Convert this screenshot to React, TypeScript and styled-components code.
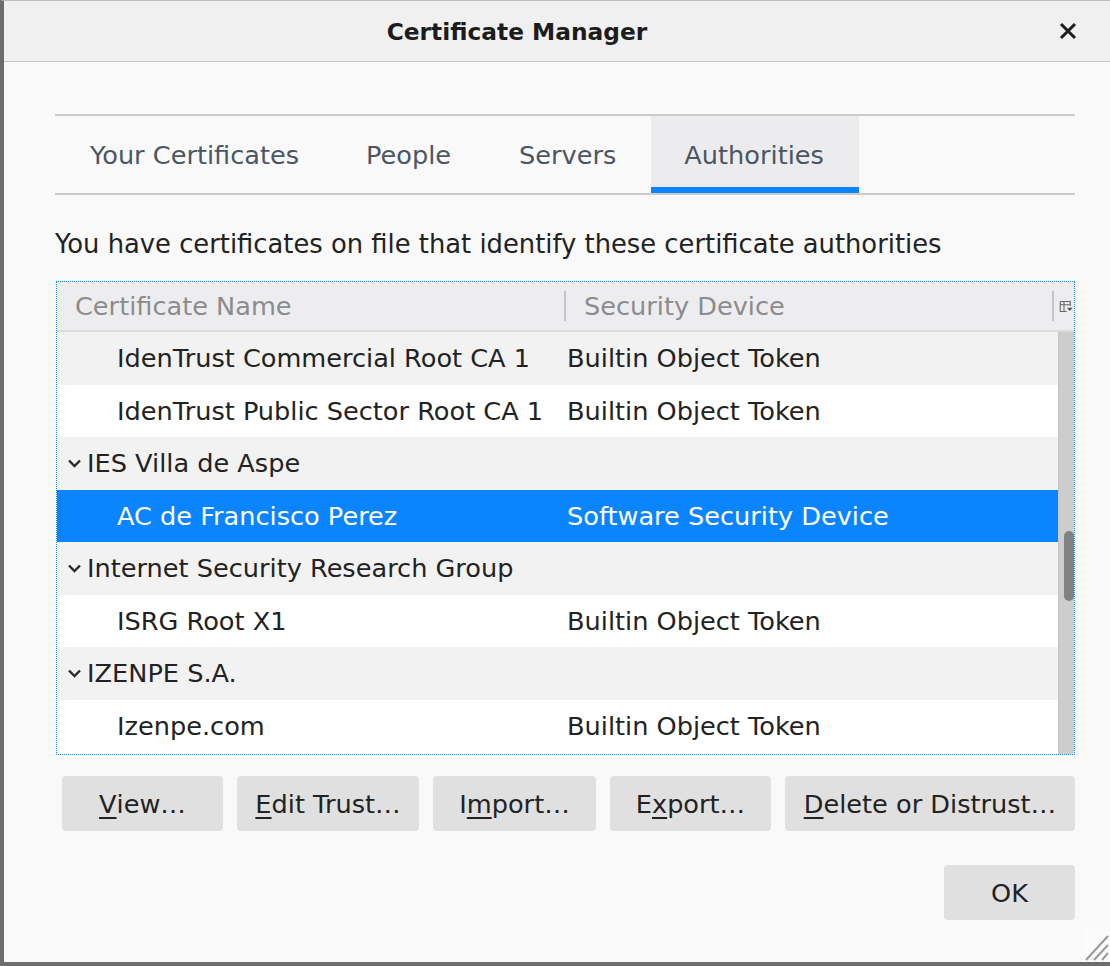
import React from "react";
import styled, { createGlobalStyle } from "styled-components";

const Global = createGlobalStyle`
  html, body { margin: 0; padding: 0; background: #f9f9f9; }
  body { font-family: "DejaVu Sans", "Noto Sans", sans-serif; }
  * { box-sizing: border-box; }
`;

const FS = "25.6px";

const Window = styled.div`
  position: relative;
  width: 1110px;
  height: 966px;
  border-left: 4px solid #6d6d6d;
  border-bottom: 4px solid #6d6d6d;
  border-top: 1px solid #bdbdbd;
  background: #f9f9f9;
  display: flex;
  flex-direction: column;
`;

const TitleBar = styled.div`
  height: 61px;
  flex: none;
  background: #f0f0f0;
  border-bottom: 1px solid #c6c6c6;
  display: flex;
  align-items: center;
`;

const Title = styled.div`
  flex: 1;
  text-align: center;
  font-weight: bold;
  font-size: 23.3px;
  color: #1c1c1c;
`;

const CloseBox = styled.div`
  width: 80px;
  display: flex;
  justify-content: center;
  align-items: center;
  padding-right: 4px;
`;

const Body = styled.div`
  flex: 1;
  padding: 52px 35px 0 51px;
  display: flex;
  flex-direction: column;
`;

const TabList = styled.div`
  display: flex;
  border-top: 2px solid #cbcbcb;
  border-bottom: 2px solid #cbcbcb;
`;

const Tab = styled.div<{ $active?: boolean }>`
  height: 77px;
  padding: 0 34px 0 35px;
  display: flex;
  align-items: center;
  font-size: ${FS};
  color: #4c5663;
  background: ${(p) => (p.$active ? "#ececee" : "transparent")};
  box-shadow: ${(p) => (p.$active ? "inset 0 -6px 0 #0a84ff" : "none")};
  & + & {
    padding-left: 33px;
    padding-right: 35px;
  }
`;

const Description = styled.div`
  margin-top: 34px;
  font-size: 25.8px;
  color: #222;
  line-height: 30px;
`;

const Tree = styled.div`
  margin-top: 22px;
  margin-left: 1px;
  border: 1px dotted #0a84ff;
  height: 474px;
  display: flex;
  flex-direction: column;
  background: #fff;
  position: relative;
`;

const Header = styled.div`
  height: 50px;
  flex: none;
  background: #ededf0;
  border-bottom: 2px solid #dcdcdf;
  display: flex;
  align-items: center;
  font-size: ${FS};
  color: #8c8c8c;
`;

const HeaderCell = styled.div<{ $w?: number }>`
  ${(p) => (p.$w ? `width: ${p.$w}px;` : "flex: 1;")}
  padding-left: 18px;
  display: flex;
  align-items: center;
  height: 100%;
  white-space: nowrap;
`;

const Splitter = styled.div`
  width: 2px;
  height: 30px;
  background: #c4c4c4;
  flex: none;
`;

const Picker = styled.div`
  width: 20px;
  height: 100%;
  display: flex;
  align-items: center;
  justify-content: flex-start;
  flex: none;
  overflow: hidden;
`;

const ListArea = styled.div`
  flex: 1;
  display: flex;
  overflow: hidden;
`;

const Rows = styled.div`
  flex: 1;
  display: flex;
  flex-direction: column;
`;

const Row = styled.div<{ $bg: string; $selected?: boolean }>`
  height: 52.5px;
  flex: none;
  display: flex;
  align-items: center;
  font-size: ${FS};
  background: ${(p) => (p.$selected ? "#0a84ff" : p.$bg)};
  color: ${(p) => (p.$selected ? "#fff" : "#222")};
`;

const NameCell = styled.div<{ $group?: boolean }>`
  width: 508px;
  flex: none;
  display: flex;
  align-items: center;
  padding-left: ${(p) => (p.$group ? "10px" : "60px")};
  gap: 5px;
  white-space: nowrap;
`;

const DeviceCell = styled.div`
  flex: 1;
  padding-left: 2px;
  white-space: nowrap;
`;

const ScrollTrack = styled.div`
  width: 16px;
  flex: none;
  background: #cdcdcd;
  border-left: 1px solid #c4c4c4;
  position: relative;
  padding-top: 199px;
  display: flex;
  justify-content: flex-end;
`;

const ScrollThumb = styled.div`
  width: 10px;
  height: 70px;
  border-radius: 5px;
  background: #7f8183;
`;

const ButtonRow = styled.div`
  margin-top: 21px;
  margin-left: 7px;
  display: flex;
  gap: 14px;
`;

const Button = styled.div<{ $grow?: boolean; $w?: number }>`
  height: 55px;
  ${(p) => (p.$w ? `width: ${p.$w}px;` : "")}
  ${(p) => (p.$grow ? "flex: 1;" : "")}
  border-radius: 4px;
  background: #e0e0e0;
  display: flex;
  align-items: center;
  justify-content: center;
  font-size: ${FS};
  color: #222;
  white-space: nowrap;
`;

const Footer = styled.div`
  margin-top: 34px;
  display: flex;
  justify-content: flex-end;
`;

const Key = styled.span`
  text-decoration: underline;
  text-underline-offset: 4px;
`;

const Grip = styled.svg`
  position: absolute;
  right: 0;
  bottom: 0;
`;

const Chevron = () => (
  <svg width="15" height="12" viewBox="0 0 15 12">
    <path d="M2 3.5 L7.5 9 L13 3.5" fill="none" stroke="#2a2a2a" strokeWidth="2.4" />
  </svg>
);

type R = { name: string; device?: string; group?: boolean; selected?: boolean };

const rows: R[] = [
  { name: "IdenTrust Commercial Root CA 1", device: "Builtin Object Token" },
  { name: "IdenTrust Public Sector Root CA 1", device: "Builtin Object Token" },
  { name: "IES Villa de Aspe", group: true },
  { name: "AC de Francisco Perez", device: "Software Security Device", selected: true },
  { name: "Internet Security Research Group", group: true },
  { name: "ISRG Root X1", device: "Builtin Object Token" },
  { name: "IZENPE S.A.", group: true },
  { name: "Izenpe.com", device: "Builtin Object Token" },
];

export default function App() {
  return (
    <>
      <Global />
      <Window>
        <TitleBar>
          <Title>Certificate Manager</Title>
          <CloseBox>
            <svg width="18" height="18" viewBox="0 0 18 18">
              <path d="M2 2 L16 16 M16 2 L2 16" stroke="#1e1e1e" strokeWidth="3" />
            </svg>
          </CloseBox>
        </TitleBar>
        <Body>
          <TabList>
            <Tab>Your Certificates</Tab>
            <Tab>People</Tab>
            <Tab>Servers</Tab>
            <Tab $active>Authorities</Tab>
          </TabList>
          <Description>
            You have certificates on file that identify these certificate authorities
          </Description>
          <Tree>
            <Header>
              <HeaderCell $w={507}>Certificate Name</HeaderCell>
              <Splitter />
              <HeaderCell>Security Device</HeaderCell>
              <Splitter />
              <Picker>
                <svg width="18" height="18" viewBox="0 0 18 18" style={{ marginLeft: 5 }}>
                  <path d="M1.5 3.5 H13.5 V9 M1.5 3.5 V15.5 H9 M1.5 7.5 H13 M6 3.5 V15.5" fill="none" stroke="#666" strokeWidth="1.3" />
                  <path d="M9.5 11 H16.5 L13 15 Z" fill="#555" />
                </svg>
              </Picker>
            </Header>
            <ListArea>
              <Rows>
                {rows.map((r, i) => (
                  <Row key={i} $bg={i % 2 === 0 ? "#f2f2f2" : "#ffffff"} $selected={r.selected}>
                    <NameCell $group={r.group}>
                      {r.group && <Chevron />}
                      {r.name}
                    </NameCell>
                    <DeviceCell>{r.device}</DeviceCell>
                  </Row>
                ))}
              </Rows>
              <ScrollTrack>
                <ScrollThumb />
              </ScrollTrack>
            </ListArea>
          </Tree>
          <ButtonRow>
            <Button $w={161}><Key>V</Key>iew…</Button>
            <Button $w={182}><Key>E</Key>dit Trust…</Button>
            <Button $w={163}>I<Key>m</Key>port…</Button>
            <Button $w={161}>E<Key>x</Key>port…</Button>
            <Button $grow><Key>D</Key>elete or Distrust…</Button>
          </ButtonRow>
          <Footer>
            <Button $w={131}>OK</Button>
          </Footer>
        </Body>
        <Grip width="28" height="34" viewBox="0 0 28 34">
          <rect x="0" y="0" width="28" height="34" fill="#fbfbfb" />
          <path d="M4 32 L26 8 M12 32 L26 17 M20 32 L26 25" stroke="#9a9a9a" strokeWidth="2" />
        </Grip>
      </Window>
    </>
  );
}
